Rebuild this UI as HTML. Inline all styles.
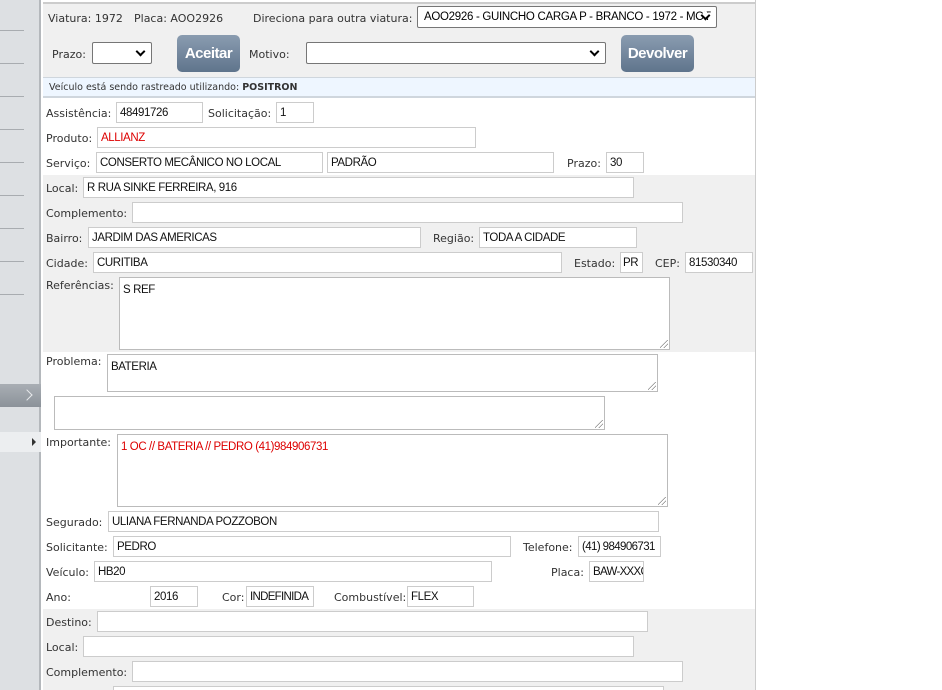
<!DOCTYPE html>
<html style="width:942px;height:690px;overflow:hidden"><head><meta charset="utf-8"><style>
*{box-sizing:border-box;margin:0;padding:0}
body{width:942px;height:690px;overflow:hidden;background:#fff;font-family:"DejaVu Sans",Verdana,sans-serif;font-size:11px;color:#333;position:relative}
.a{position:absolute}
#side{left:0;top:0;width:41px;height:690px;background:#dde0e3;border-right:2px solid #b4b8bc}
.sl{position:absolute;left:0;width:24px;height:1px;background:#a8acb0}
#panel{left:43px;top:0;width:713px;height:690px;border-right:1px solid #ccc;background:#fff}
.bg{position:absolute;left:43px;width:712px;background:#f0f0f0}
.l{position:absolute;white-space:nowrap;font-size:11px;color:#333;margin-top:1px}
.i{position:absolute;height:21px;background:#fff;border:1px solid #ccc;font-family:"Liberation Sans",Arial,sans-serif;font-size:11.5px;letter-spacing:-0.4px;padding:4px 3px 0;color:#111;white-space:nowrap;overflow:hidden}
.sel{position:absolute;height:22px;background:#fff;border:1px solid #767676;border-radius:2px;font-family:"Liberation Sans",Arial,sans-serif;font-size:11.5px;letter-spacing:-0.3px;padding:4px 22px 0 6px;color:#000;white-space:nowrap;overflow:hidden}
.sel:after{content:"";position:absolute;right:7px;top:5px;width:5px;height:5px;border-right:2px solid #000;border-bottom:2px solid #000;transform:rotate(45deg);background:#fff}
.btn{position:absolute;height:37px;border-radius:5px;background:linear-gradient(#8a9cb0,#5f748c);color:#fff;font-family:"Liberation Sans",Arial,sans-serif;font-weight:bold;font-size:15px;text-align:center;line-height:37px;letter-spacing:-0.5px}
.ta{position:absolute;background:#fff;border:1px solid #bbb;font-family:"Liberation Sans",Arial,sans-serif;font-size:11.5px;letter-spacing:-0.4px;padding:6px 3px;color:#111}
.ta:after{content:"";position:absolute;right:1px;bottom:1px;width:8px;height:8px;background:linear-gradient(135deg,transparent 45%,#888 46%,#888 52%,transparent 53%,transparent 70%,#888 71%,#888 77%,transparent 78%)}
</style></head><body>
<div id="side" class="a">
<div class="sl" style="top:30px"></div><div class="sl" style="top:63px"></div><div class="sl" style="top:96px"></div><div class="sl" style="top:129px"></div><div class="sl" style="top:162px"></div><div class="sl" style="top:195px"></div><div class="sl" style="top:228px"></div><div class="sl" style="top:261px"></div><div class="sl" style="top:294px"></div>
<div class="a" style="left:0;top:384px;width:41px;height:23px;background:linear-gradient(#a9aeb4,#8b9299)"><div class="a" style="left:23px;top:7px;width:8px;height:8px;border-right:1.5px solid #e8eaec;border-top:1.5px solid #e8eaec;transform:rotate(45deg)"></div></div>
<div class="a" style="left:0;top:432px;width:41px;height:20px;background:#eceef0"><div class="a" style="left:32px;top:6px;width:0;height:0;border-left:4px solid #333;border-top:4px solid transparent;border-bottom:4px solid transparent"></div></div>
</div>
<div id="panel" class="a"></div>
<div class="bg" style="top:2px;height:75px;border-top:2px solid #ccc"></div>
<div class="bg" style="top:77px;height:21px;background:#eef6ff;border-top:1px solid #cfd6dd;border-bottom:2px solid #cfd6dd"></div>
<div class="bg" style="top:175px;height:177px"></div>
<div class="bg" style="top:609px;height:81px"></div>

<div class="l" style="left:48px;top:11px">Viatura: 1972</div>
<div class="l" style="left:134px;top:11px">Placa: AOO2926</div>
<div class="l" style="left:253px;top:11px">Direciona para outra viatura:</div>
<div class="sel" style="left:417px;top:6px;width:300px">AOO2926 - GUINCHO CARGA P - BRANCO - 1972 - MOT</div>
<div class="l" style="left:52px;top:47px">Prazo:</div>
<div class="sel" style="left:92px;top:42px;width:60px"></div>
<div class="btn" style="left:177px;top:35px;width:63px">Aceitar</div>
<div class="l" style="left:249px;top:47px">Motivo:</div>
<div class="sel" style="left:306px;top:42px;width:300px"></div>
<div class="btn" style="left:621px;top:35px;width:73px">Devolver</div>
<div class="l" style="left:49px;top:81px;font-size:9.5px">Veículo está sendo rastreado utilizando: <b>POSITRON</b></div>

<div class="l" style="left:46px;top:106px">Assistência:</div><div class="i" style="left:116px;top:102px;width:87px">48491726</div>
<div class="l" style="left:208px;top:106px">Solicitação:</div><div class="i" style="left:276px;top:102px;width:38px">1</div>
<div class="l" style="left:46px;top:131px">Produto:</div><div class="i" style="left:97px;top:127px;width:379px;color:#d00">ALLIANZ</div>
<div class="l" style="left:46px;top:156px">Serviço:</div><div class="i" style="left:96px;top:152px;width:227px">CONSERTO MECÂNICO NO LOCAL</div><div class="i" style="left:327px;top:152px;width:227px">PADRÃO</div>
<div class="l" style="left:567px;top:156px">Prazo:</div><div class="i" style="left:606px;top:152px;width:38px">30</div>
<div class="l" style="left:46px;top:181px">Local:</div><div class="i" style="left:83px;top:177px;width:551px">R RUA SINKE FERREIRA, 916</div>
<div class="l" style="left:46px;top:206px">Complemento:</div><div class="i" style="left:132px;top:202px;width:551px"></div>
<div class="l" style="left:46px;top:231px">Bairro:</div><div class="i" style="left:88px;top:227px;width:333px">JARDIM DAS AMERICAS</div>
<div class="l" style="left:433px;top:231px">Região:</div><div class="i" style="left:479px;top:227px;width:158px">TODA A CIDADE</div>
<div class="l" style="left:46px;top:256px">Cidade:</div><div class="i" style="left:93px;top:252px;width:469px">CURITIBA</div>
<div class="l" style="left:574px;top:256px">Estado:</div><div class="i" style="left:620px;top:252px;width:23px;padding:4px 2px 0">PR</div>
<div class="l" style="left:655px;top:256px">CEP:</div><div class="i" style="left:685px;top:252px;width:68px">81530340</div>
<div class="l" style="left:46px;top:278px">Referências:</div><div class="ta" style="left:119px;top:277px;width:551px;height:73px">S REF</div>
<div class="l" style="left:46px;top:354px">Problema:</div><div class="ta" style="left:107px;top:354px;width:551px;height:38px">BATERIA</div>
<div class="ta" style="left:54px;top:396px;width:551px;height:34px"></div>
<div class="l" style="left:46px;top:435px">Importante:</div><div class="ta" style="left:117px;top:434px;width:551px;height:73px;color:#d00">1 OC // BATERIA // PEDRO (41)984906731</div>
<div class="l" style="left:46px;top:515px">Segurado:</div><div class="i" style="left:108px;top:511px;width:551px">ULIANA FERNANDA POZZOBON</div>
<div class="l" style="left:46px;top:540px">Solicitante:</div><div class="i" style="left:113px;top:536px;width:398px">PEDRO</div>
<div class="l" style="left:523px;top:540px">Telefone:</div><div class="i" style="left:578px;top:536px;width:83px;letter-spacing:-0.6px">(41) 984906731</div>
<div class="l" style="left:46px;top:565px">Veículo:</div><div class="i" style="left:94px;top:561px;width:398px">HB20</div>
<div class="l" style="left:551px;top:565px">Placa:</div><div class="i" style="left:589px;top:561px;width:55px;letter-spacing:-0.7px">BAW-XXXC</div>
<div class="l" style="left:46px;top:590px">Ano:</div><div class="i" style="left:150px;top:586px;width:48px">2016</div>
<div class="l" style="left:222px;top:590px">Cor:</div><div class="i" style="left:246px;top:586px;width:68px;letter-spacing:-0.7px">INDEFINIDA</div>
<div class="l" style="left:334px;top:590px">Combustível:</div><div class="i" style="left:407px;top:586px;width:67px">FLEX</div>
<div class="l" style="left:46px;top:615px">Destino:</div><div class="i" style="left:97px;top:611px;width:551px"></div>
<div class="l" style="left:46px;top:640px">Local:</div><div class="i" style="left:83px;top:636px;width:551px"></div>
<div class="l" style="left:46px;top:665px">Complemento:</div><div class="i" style="left:132px;top:661px;width:551px"></div>
<div class="i" style="left:113px;top:686px;width:551px;height:4px;border-bottom:none"></div>
</body></html>
